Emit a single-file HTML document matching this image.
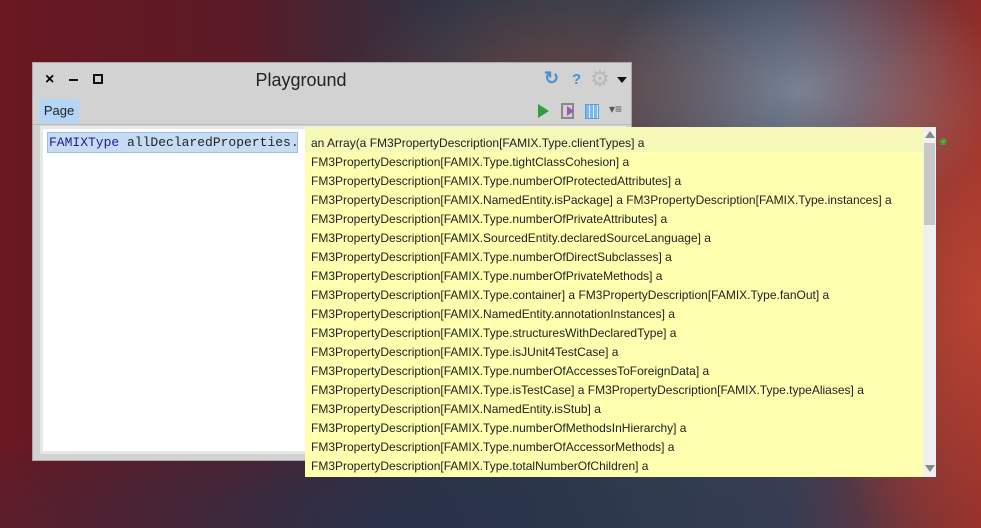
<!DOCTYPE html>
<html><head><style>
body{margin:0;width:981px;height:528px;overflow:hidden;position:relative;font-family:"Liberation Sans",sans-serif;
background:
radial-gradient(ellipse 220px 120px at 560px 90px,rgba(200,90,60,.35),transparent),
radial-gradient(ellipse 200px 140px at 800px 90px,rgba(170,185,200,.55),transparent),
radial-gradient(ellipse 160px 320px at 980px 300px,rgba(190,70,50,.9),transparent),
radial-gradient(ellipse 500px 120px at 400px 520px,rgba(40,50,75,.9),transparent),
linear-gradient(90deg,#6a1822 0%,#5a1a26 25%,#2c3444 45%,#34404f 65%,#3a3f55 80%,#8a2a28 100%);}
.win{position:absolute;left:32px;top:62px;width:600px;height:399px;background:#d2d2d2;border:1px solid #a8a8a8;box-sizing:border-box}
.title{position:absolute;left:168px;top:0;width:200px;height:34px;text-align:center;font-size:18px;line-height:34px;color:#222}
.tab{position:absolute;left:6px;top:36px;width:40px;height:24px;background:#b3d5f6;font-size:13px;line-height:24px;text-align:center;color:#222}
.sep{position:absolute;left:0;top:61px;width:100%;height:1px;background:#bbb}
.edit{position:absolute;left:7px;top:63px;width:586px;height:328px;background:#e8e8e8}
.edit2{position:absolute;left:10px;top:66px;width:580px;height:322px;background:#fff}
.code{position:absolute;left:47px;top:132px;width:251px;height:21px;background:#c6dcf3;border:1px solid #9fbde0;box-sizing:border-box;font-family:"Liberation Mono",monospace;font-size:13px;line-height:19px;padding-left:1px;color:#222;white-space:nowrap;overflow:hidden}
.pop{position:absolute;left:305px;top:127px;width:631px;height:350px;background:#ffffb0;overflow:hidden}
.pop div.t{position:absolute;left:6px;top:7px;font-size:12px;line-height:19px;color:#222;white-space:nowrap}
.hl{position:absolute;left:0;top:0;width:618px;height:25px;background:#f6f8b8}
.sb{position:absolute;right:0;top:0;width:13px;height:350px;background:#f0f0f0}
.thumb{position:absolute;left:1px;top:16px;width:11px;height:82px;background:#c8c8c8}
</style></head><body>
<div class="win">
 <div class="title">Playground</div>
 <div style="position:absolute;left:12px;top:8px;font-size:16px;font-weight:bold">×</div>
 <div style="position:absolute;left:36px;top:16px;width:9px;height:2px;background:#111"></div>
 <div style="position:absolute;left:60px;top:11px;width:6px;height:6px;border:2px solid #111"></div>
 <div style="position:absolute;left:511px;top:5px;color:#4a8fd0;font-size:18px;font-weight:bold">↻</div>
 <div style="position:absolute;left:539px;top:8px;color:#4a8fd0;font-size:15px;font-weight:bold">?</div>
 <div style="position:absolute;left:557px;top:3px;color:#b8b8b8;font-size:22px">⚙</div>
 <div style="position:absolute;left:584px;top:14px;border-left:5px solid transparent;border-right:5px solid transparent;border-top:6px solid #111"></div>
 <div class="tab">Page</div>
 <div style="position:absolute;left:505px;top:41px;border-top:7px solid transparent;border-bottom:7px solid transparent;border-left:11px solid #2ea043"></div>
 <div style="position:absolute;left:528px;top:40px;width:9px;height:12px;border:2px solid #888"></div>
 <div style="position:absolute;left:534px;top:43px;width:0;height:0;border-top:5px solid transparent;border-bottom:5px solid transparent;border-left:7px solid #9b59b6"></div>
 <div style="position:absolute;left:552px;top:41px;width:12px;height:13px;border:1px solid #5aa0d8;background:repeating-linear-gradient(90deg,#7ab8e8 0 3px,#d8ecfa 3px 4px)"></div>
 <div style="position:absolute;left:576px;top:39px;font-size:12px;color:#555">▾≡</div>
 <div class="sep"></div>
 <div class="edit"></div><div class="edit2"></div>
</div>
<div class="code"><span style="color:#1a1a9a">FAMIXType</span> allDeclaredProperties.</div>
<div class="pop"><div class="hl"></div><div class="t">an Array(a FM3PropertyDescription[FAMIX.Type.clientTypes] a<br>FM3PropertyDescription[FAMIX.Type.tightClassCohesion] a<br>FM3PropertyDescription[FAMIX.Type.numberOfProtectedAttributes] a<br>FM3PropertyDescription[FAMIX.NamedEntity.isPackage] a FM3PropertyDescription[FAMIX.Type.instances] a<br>FM3PropertyDescription[FAMIX.Type.numberOfPrivateAttributes] a<br>FM3PropertyDescription[FAMIX.SourcedEntity.declaredSourceLanguage] a<br>FM3PropertyDescription[FAMIX.Type.numberOfDirectSubclasses] a<br>FM3PropertyDescription[FAMIX.Type.numberOfPrivateMethods] a<br>FM3PropertyDescription[FAMIX.Type.container] a FM3PropertyDescription[FAMIX.Type.fanOut] a<br>FM3PropertyDescription[FAMIX.NamedEntity.annotationInstances] a<br>FM3PropertyDescription[FAMIX.Type.structuresWithDeclaredType] a<br>FM3PropertyDescription[FAMIX.Type.isJUnit4TestCase] a<br>FM3PropertyDescription[FAMIX.Type.numberOfAccessesToForeignData] a<br>FM3PropertyDescription[FAMIX.Type.isTestCase] a FM3PropertyDescription[FAMIX.Type.typeAliases] a<br>FM3PropertyDescription[FAMIX.NamedEntity.isStub] a<br>FM3PropertyDescription[FAMIX.Type.numberOfMethodsInHierarchy] a<br>FM3PropertyDescription[FAMIX.Type.numberOfAccessorMethods] a<br>FM3PropertyDescription[FAMIX.Type.totalNumberOfChildren] a</div>
<div class="sb"><div style="position:absolute;left:2px;top:4px;border-left:5px solid transparent;border-right:5px solid transparent;border-bottom:7px solid #888"></div><div class="thumb"></div><div style="position:absolute;left:2px;top:338px;border-left:5px solid transparent;border-right:5px solid transparent;border-top:7px solid #888"></div></div>
</div>
<div style="position:absolute;left:939px;top:137px;color:#3c3;font-size:10px">❀</div>
</body></html>
